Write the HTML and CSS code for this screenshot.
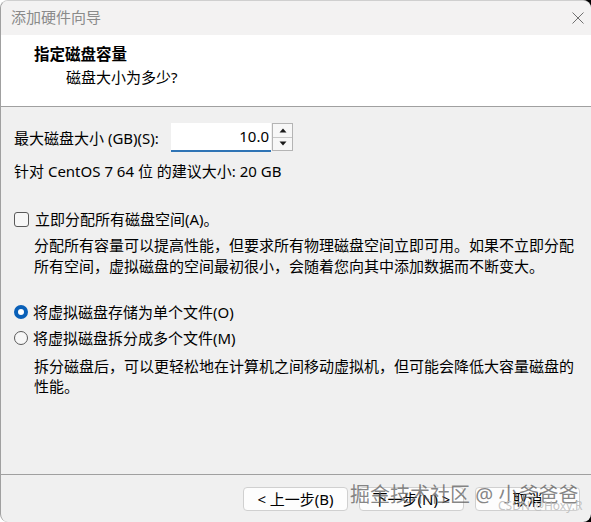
FILE: index.html
```html
<!DOCTYPE html>
<html lang="zh-CN">
<head>
<meta charset="utf-8">
<title>添加硬件向导</title>
<link rel="stylesheet" href="styles.css">
</head>
<body>
<div class="window">
  <div class="titlebar">
    <span class="title">添加硬件向导</span>
    <svg class="close" width="12" height="12" viewBox="0 0 12 12"><path d="M0.5 0.5L11.5 11.5M11.5 0.5L0.5 11.5" stroke="#707070" stroke-width="1" fill="none"/></svg>
  </div>
  <div class="header">
    <div class="h-title">指定磁盘容量</div>
    <div class="h-sub">磁盘大小为多少?</div>
  </div>
  <div class="content">
    <div class="size-row">
      <span class="size-label">最大磁盘大小 (GB)(S):</span>
      <div class="spin-input">10.0</div>
      <div class="spin-btns">
        <div class="spin-btn"><svg width="8" height="5" viewBox="0 0 8 5"><path d="M4 0.5L7.5 4.5H0.5Z" fill="#1a1a1a"/></svg></div>
        <div class="spin-btn"><svg width="8" height="5" viewBox="0 0 8 5"><path d="M0.5 0.5H7.5L4 4.5Z" fill="#1a1a1a"/></svg></div>
      </div>
    </div>
    <div class="rec">针对 CentOS 7 64 位 的建议大小: 20 GB</div>
    <div class="option check-opt"><span class="checkbox"></span><span>立即分配所有磁盘空间(A)。</span></div>
    <p class="desc desc-first">分配所有容量可以提高性能，但要求所有物理磁盘空间立即可用。如果不立即分配<br>所有空间，虚拟磁盘的空间最初很小，会随着您向其中添加数据而不断变大。</p>
    <div class="option radio-first"><span class="radio on"></span><span>将虚拟磁盘存储为单个文件(O)</span></div>
    <div class="option radio-second"><span class="radio"></span><span>将虚拟磁盘拆分成多个文件(M)</span></div>
    <p class="desc desc-second">拆分磁盘后，可以更轻松地在计算机之间移动虚拟机，但可能会降低大容量磁盘的<br>性能。</p>
  </div>
  <div class="footer">
    <button class="btn">&lt; 上一步(B)</button>
    <button class="btn">下一步(N) &gt;</button>
    <button class="btn">取消</button>
  </div>
  <div class="watermark">掘金技术社区 @ 小斧爸爸</div>
  <div class="watermark2">CSDN @Hoxy.R</div>
</div>
</body>
</html>
```

FILE: styles.css
```css
* { box-sizing: border-box; margin: 0; padding: 0; }
html, body { width: 591px; height: 522px; overflow: hidden; }
body {
  background: linear-gradient(to right, #ffffff 50%, #000000 50%);
  font-family: "Noto Sans", "Noto Sans CJK SC", sans-serif;
  font-size: 15px;
  color: #000;
}
.window {
  position: relative;
  width: 591px;
  height: 522px;
  background: #f0f0f0;
  border-radius: 8px;
  border-left: 1px solid #a0a0a0;
  border-top: 1px solid #cfcfcf;
  display: flex;
  flex-direction: column;
  overflow: hidden;
}
.titlebar {
  height: 34px;
  flex: none;
  background: #f3f2f2;
  display: flex;
  align-items: center;
  justify-content: space-between;
  padding: 0 7px 0 10px;
}
.title { color: #8a8a8a; font-size: 15px; line-height: 20px; margin-top: -2px; }
.header {
  height: 72px;
  flex: none;
  background: #fff;
  border-bottom: 1px solid #a0a0a0;
  padding: 9px 0 0 33px;
}
.h-title { font-weight: bold; font-size: 15.5px; line-height: 20px; }
.h-sub { margin: 3px 0 0 32px; line-height: 20px; }
.content { flex: 1; padding: 16px 0 0 13px; }
.size-row { display: flex; align-items: center; height: 29px; }
.size-label { width: 157px; line-height: 20px; }
.spin-input {
  width: 100px;
  height: 29px;
  background: #fff;
  border-bottom: 2px solid #2f74b5;
  text-align: right;
  padding-right: 2px;
  line-height: 27px;
}
.spin-btns {
  width: 21px;
  height: 28px;
  margin-left: 1px;
  align-self: flex-start;
  border: 1px solid #b4b4b4;
  display: flex;
  flex-direction: column;
  background: #f7f7f7;
}
.spin-btn {
  flex: 1;
  display: flex;
  align-items: center;
  justify-content: center;
}
.spin-btn + .spin-btn { border-top: 1px solid #c8c8c8; }
.rec { margin-top: 9px; line-height: 20px; }
.option { display: flex; align-items: center; line-height: 20px; gap: 5px; }
.check-opt { margin-top: 28px; gap: 6px; }
.checkbox {
  width: 15px; height: 15px;
  border: 1px solid #5a5a5a;
  border-radius: 3px;
  background: #f7f7f7;
}
.desc { margin-left: 20px; line-height: 21px; }
.desc-first { margin-top: 6px; }
.desc-second { margin-top: 8px; line-height: 20px; }
.radio-first { margin-top: 25px; }
.radio-second { margin-top: 6px; }
.radio {
  width: 14px; height: 14px;
  border-radius: 50%;
  border: 1px solid #5a5a5a;
  background: #f7f7f7;
}
.radio.on { border: 4px solid #0a60b8; background: #fff; }
.footer {
  height: 48px;
  flex: none;
  border-top: 1px solid #a0a0a0;
  display: flex;
  justify-content: flex-end;
  gap: 11px;
  padding: 12px 11px 0 0;
}
.btn {
  width: 105px;
  height: 24px;
  background: #fdfdfd;
  border: 1px solid #d0d0d0;
  border-radius: 4px;
  font-family: inherit;
  font-size: 15px;
  line-height: 20px;
  color: #000;
}
.watermark {
  position: absolute;
  left: 349px;
  top: 481px;
  font-size: 20px;
  line-height: 26px;
  color: rgba(95, 95, 95, 0.75);
  white-space: nowrap;
}
.watermark2 {
  position: absolute;
  left: 497px;
  top: 497px;
  font-size: 12px;
  line-height: 16px;
  color: rgba(190, 190, 190, 0.9);
  white-space: nowrap;
}
```
